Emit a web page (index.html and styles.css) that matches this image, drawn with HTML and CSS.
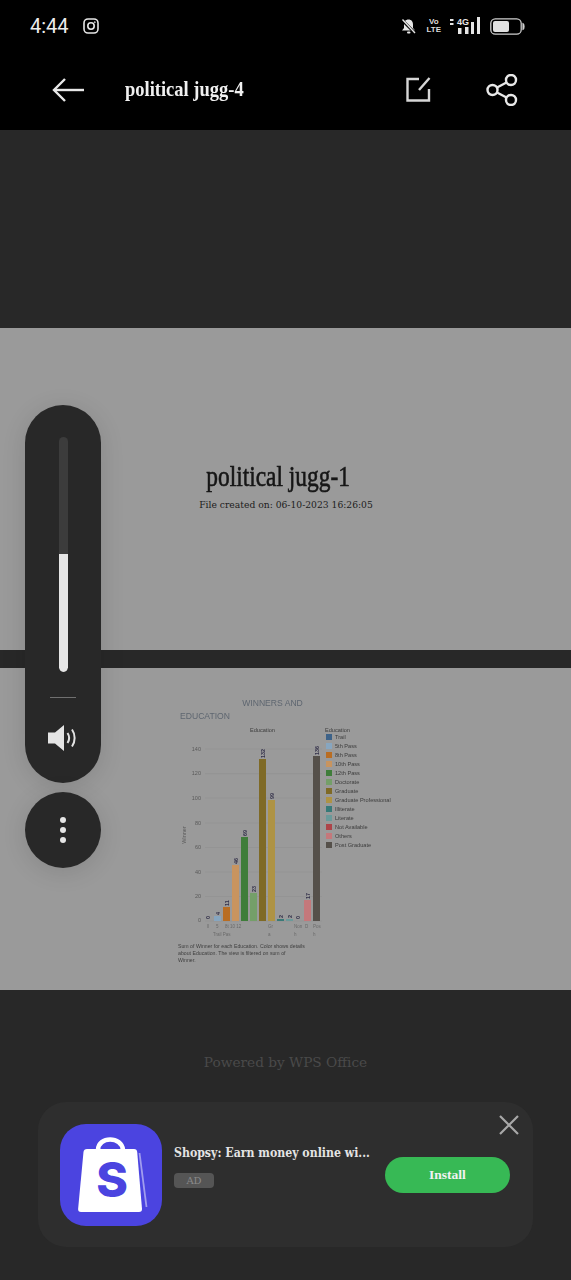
FILE: index.html
```html
<!DOCTYPE html>
<html lang="en">
<head>
    <meta charset="UTF-8">
    <meta name="viewport" content="width=device-width, initial-scale=1.0">
    <title>political jugg-4</title>
    <link rel="stylesheet" href="styles.css">
</head>
<body>
    <div class="screen">
        <!--status bar-->
        <div class="status">
            <div class="status-left">
                <span class="clock">4:44</span>
                <svg class="ig" width="16" height="16" viewBox="0 0 16 16" fill="none" stroke="#e6e6e6" stroke-width="1.6">
                    <rect x="1" y="1" width="14" height="14" rx="4"/>
                    <circle cx="8" cy="8" r="3.2"/>
                    <circle cx="11.8" cy="4.2" r=".6" fill="#e6e6e6" stroke-width=".5"/>
                </svg>
            </div>
            <div class="status-right">
                <svg width="17" height="17" viewBox="0 0 17 17">
                    <path d="M8.5 1.5c-3 0-4.5 2.300-4.500 5v3.500L2 12.500h13L13 10V6.500c0-2.700-1.500-5-4.500-5z" fill="#e6e6e6"/>
                    <rect x="7" y="13.500" width="3.500" height="2" rx="1" fill="#e6e6e6"/>
                    <path d="M2 2l13 13" stroke="#000" stroke-width="3"/>
                    <path d="M2.500 1.500l12.500 13.500" stroke="#e6e6e6" stroke-width="1.400"/>
                </svg>
                <div class="volte"><span>Vo</span><span>LTE</span></div>
                <svg class="signal" width="31" height="18" viewBox="0 0 31 18" fill="#e6e6e6">
                    <rect x="0" y="2" width="3.500" height="2"/>
                    <rect x="0" y="6" width="3.500" height="2"/>
                    <text x="7" y="8" class="net">4G</text>
                    <rect x="8" y="11" width="3.500" height="6"/>
                    <rect x="15" y="10" width="3.500" height="7"/>
                    <rect x="21" y="5" width="3" height="12"/>
                    <rect x="27" y="0" width="3" height="17"/>
                </svg>
                <svg width="35" height="17" viewBox="0 0 35 17" fill="none">
                    <rect x=".8" y=".8" width="30.400" height="15.400" rx="4.500" stroke="#cfcfcf" stroke-width="1.300"/>
                    <rect x="3" y="3" width="16" height="11" rx="2" fill="#e0e0e0"/>
                    <path d="M33 5.500c1.400.5 1.400 5.500 0 6z" stroke="#cfcfcf" stroke-width="1.200"/>
                </svg>
            </div>
        </div>

        <!--title bar-->
        <div class="toolbar">
            <svg class="back" width="32" height="24" viewBox="0 0 32 24" fill="none" stroke="#e8e8e8" stroke-width="2.400">
                <path d="M32 12H2"/>
                <path d="M13 1L2 12l11 11"/>
            </svg>
            <div class="doc-name">political jugg-4</div>
            <svg class="edit" width="25" height="25" viewBox="0 0 25 25" fill="none" stroke="#d6d6d6" stroke-width="2.400">
                <path d="M13 2H1.500v21.500h21.500V12"/>
                <path d="M23.500 1L13 13"/>
            </svg>
            <svg class="share" width="32" height="32" viewBox="0 0 32 32" fill="none" stroke="#e8e8e8" stroke-width="2.400">
                <circle cx="6.500" cy="16" r="5"/>
                <circle cx="25" cy="6" r="5"/>
                <circle cx="25" cy="26" r="5"/>
                <path d="M11 13.500l9.500-5M11 18.500l9.500 5"/>
            </svg>
        </div>

        <!--pages-->
        <div class="viewer">
            <div class="slide slide-title">
                <h1>political jugg-1</h1>
                <p>File created on: 06-10-2023 16:26:05</p>
            </div>
            <div class="slide slide-chart">
                <svg class="chart" width="240" height="300" viewBox="160 680 240 300">
                    <text x="272.500" y="706" class="c-title" text-anchor="middle">WINNERS AND</text>
                    <text x="180" y="719" class="c-title">EDUCATION</text>
                    <text x="250" y="732" class="c-small">Education</text>
                    <text x="325" y="732" class="c-small">Education</text>

                    <g class="grid">
                        <path d="M205 749H322M205 773.600H322M205 798H322M205 823H322M205 847.500H322M205 872H322M205 896.500H322M205 921H322"/>
                    </g>
                    <g class="c-axis">
                        <text x="201" y="751" text-anchor="end">140</text>
                        <text x="201" y="775" text-anchor="end">120</text>
                        <text x="201" y="800" text-anchor="end">100</text>
                        <text x="201" y="825" text-anchor="end">80</text>
                        <text x="201" y="849" text-anchor="end">60</text>
                        <text x="201" y="874" text-anchor="end">40</text>
                        <text x="201" y="898" text-anchor="end">20</text>
                        <text x="201" y="922" text-anchor="end">0</text>
                    </g>
                    <text class="c-axis" transform="translate(186 835) rotate(-90)" text-anchor="middle">Winner</text>

                    <!--bars-->
                    <rect x="214" y="916" width="7" height="5" fill="#87a6c0"/>
                    <rect x="223" y="907" width="7" height="14" fill="#b96d22"/>
                    <rect x="232" y="865" width="7" height="56" fill="#c8945f"/>
                    <rect x="241" y="837" width="7" height="84" fill="#3f7d3a"/>
                    <rect x="250" y="893" width="7" height="28" fill="#749f69"/>
                    <rect x="259" y="759" width="7" height="162" fill="#7f6a26"/>
                    <rect x="268" y="800" width="7" height="121" fill="#ae9344"/>
                    <rect x="277" y="919" width="7" height="2" fill="#3a7a78"/>
                    <rect x="286" y="919" width="7" height="2" fill="#6b9a9a"/>
                    <rect x="304" y="900" width="7" height="21" fill="#c4787b"/>
                    <rect x="313" y="756" width="7" height="165" fill="#55504a"/>

                    <!--값 라벨은 세로로 회전-->
                    <g class="c-val">
                        <text transform="translate(210 919) rotate(-90)">0</text>
                        <text transform="translate(219.500 915) rotate(-90)">4</text>
                        <text transform="translate(228.500 906) rotate(-90)">11</text>
                        <text transform="translate(237.500 864) rotate(-90)">46</text>
                        <text transform="translate(246.500 836) rotate(-90)">69</text>
                        <text transform="translate(255.500 892) rotate(-90)">23</text>
                        <text transform="translate(264.500 758) rotate(-90)">132</text>
                        <text transform="translate(273.500 799) rotate(-90)">99</text>
                        <text transform="translate(282.500 918) rotate(-90)">2</text>
                        <text transform="translate(291.500 918) rotate(-90)">2</text>
                        <text transform="translate(300 919) rotate(-90)">0</text>
                        <text transform="translate(309.500 899) rotate(-90)">17</text>
                        <text transform="translate(318.500 755) rotate(-90)">136</text>
                    </g>
                    <g class="c-tick">
                        <text x="207" y="928">Il</text>
                        <text x="216" y="928">5</text>
                        <text x="225" y="928">8t 10 12</text>
                        <text x="268" y="928">Gr</text>
                        <text x="294" y="928">Non</text>
                        <text x="305" y="928">D</text>
                        <text x="313" y="928">Pos</text>
                        <text x="213" y="936">Trail Pas</text>
                        <text x="268" y="936">a</text>
                        <text x="294" y="936">h</text>
                        <text x="313" y="936">h</text>
                    </g>

                    <!--legend-->
                    <g class="c-small">
                        <rect x="326" y="734" width="6" height="6" fill="#3d6288"/><text x="335" y="739">Trail</text>
                        <rect x="326" y="743" width="6" height="6" fill="#87a6c0"/><text x="335" y="748">5th Pass</text>
                        <rect x="326" y="752" width="6" height="6" fill="#b96d22"/><text x="335" y="757">8th Pass</text>
                        <rect x="326" y="761" width="6" height="6" fill="#c8945f"/><text x="335" y="766">10th Pass</text>
                        <rect x="326" y="770" width="6" height="6" fill="#3f7d3a"/><text x="335" y="775">12th Pass</text>
                        <rect x="326" y="779" width="6" height="6" fill="#749f69"/><text x="335" y="784">Doctorate</text>
                        <rect x="326" y="788" width="6" height="6" fill="#7f6a26"/><text x="335" y="793">Graduate</text>
                        <rect x="326" y="797" width="6" height="6" fill="#ae9344"/><text x="335" y="802">Graduate Professional</text>
                        <rect x="326" y="806" width="6" height="6" fill="#377a78"/><text x="335" y="811">Illiterate</text>
                        <rect x="326" y="815" width="6" height="6" fill="#6b9a9a"/><text x="335" y="820">Literate</text>
                        <rect x="326" y="824" width="6" height="6" fill="#ad4449"/><text x="335" y="829">Not Available</text>
                        <rect x="326" y="833" width="6" height="6" fill="#c4787b"/><text x="335" y="838">Others</text>
                        <rect x="326" y="842" width="6" height="6" fill="#55504a"/><text x="335" y="847">Post Graduate</text>
                    </g>

                    <g class="c-note">
                        <text x="178" y="948">Sum of Winner for each Education.  Color shows details</text>
                        <text x="178" y="955">about Education.  The view is filtered on sum of</text>
                        <text x="178" y="962">Winner.</text>
                    </g>
                </svg>
            </div>
            <div class="powered">Powered by WPS Office</div>

            <!--ad-->
            <div class="ad">
                <svg class="ad-logo" width="102" height="102" viewBox="0 0 102 102">
                    <rect width="102" height="102" rx="26" fill="#4b44e0"/>
                    <path d="M38 26c0-14 24-14 25 0" fill="none" stroke="#fff" stroke-width="4.500"/>
                    <path d="M27 25H74c2 0 3 1 3.200 3L82 85c.1 2-1 3-3 3H21c-2 0-3-1-2.900-3L23.500 28c.2-2 1.500-3 3.500-3z" fill="#fff"/>
                    <path d="M79.500 29l7 54" stroke="#a19dee" stroke-width="1.800"/>
                    <text x="52" y="73" class="ad-s" text-anchor="middle">S</text>
                </svg>
                <div class="ad-text">
                    <div class="ad-name">Shopsy: Earn money online wi...</div>
                    <span class="ad-tag">AD</span>
                </div>
                <button class="install">Install</button>
                <svg class="ad-close" width="20" height="20" viewBox="0 0 20 20" stroke="#a8a8a8" stroke-width="2.200">
                    <path d="M1 1l18 18M19 1L1 19"/>
                </svg>
            </div>
        </div>

        <!--floating volume control-->
        <div class="float">
            <div class="volume">
                <div class="track"><div class="fill"></div></div>
                <div class="divider"></div>
                <svg width="30" height="28" viewBox="0 0 30 28" fill="#e4e4e4">
                    <path d="M0 8.500h7L16 1v26l-9-7.500H0z"/>
                    <path d="M19.500 9c2 3 2 7 0 10" fill="none" stroke="#e4e4e4" stroke-width="2"/>
                    <path d="M24 5.500c3.500 5 3.500 12 0 17" fill="none" stroke="#e4e4e4" stroke-width="2"/>
                </svg>
            </div>
            <div class="more">
                <span></span><span></span><span></span>
            </div>
        </div>
    </div>
</body>
</html>
```

FILE: styles.css
```css
*{
 box-sizing: border-box;
}
body{
 margin: 0;
 background-color: #282828;
 font-family: "DejaVu Serif", serif;
}
.screen{
 width: 571px;
 height: 1280px;
 overflow: hidden;
 position: relative;/*float 기준*/
}

/* status bar */
.status{
 height: 52px;
 background-color: #000;
 display: flex;
 justify-content: space-between;
 align-items: center;
 padding: 0 46px 0 30px;
}
.status-left, .status-right{
 display: flex;
 align-items: center;
}
.status-left{
 gap: 14px;
}
.status-right{
 gap: 9px;
}
.clock{
 font-family: Roboto, sans-serif;
 font-size: 20px;
 font-weight: 400;
 color: #ececec;
}
.volte{
 display: flex;
 flex-direction: column;
 font-family: "Liberation Sans", sans-serif;
 font-size: 8px;
 font-weight: 700;
 line-height: 8px;
 color: #dcdcdc;
 text-align: center;
}
.net{
 font-family: "Liberation Sans", sans-serif;
 font-size: 9px;
 font-weight: 700;
}

/* title bar */
.toolbar{
 height: 78px;
 background-color: #000;
 display: flex;
 align-items: center;
 padding: 0 53px 0 52px;
}
.back{
 margin-top: -2px;
}
.doc-name{
 flex: 1;
 margin: -4px 0 0 41px;
 font-family: "Liberation Serif", serif;
 font-size: 21.500px;
 font-weight: 700;
 color: #f0f0f0;
 transform: scaleX(.86);/*원본 글꼴이 더 좁다*/
 transform-origin: left center;
}
.edit{
 margin-right: 55px;
 margin-top: -3px;
}
.share{
 margin-top: -3px;
}

/* pages */
.viewer{
 padding-top: 198px;
}
.slide{
 height: 322px;
 background-color: #9a9a9a;
}
.slide-title{
 margin-bottom: 18px;
 display: flex;
 flex-direction: column;
 align-items: center;
 padding-top: 130px;
 padding-left: 1px;
}
.slide-title h1{
 margin: 0 15px 0 0;
 font-family: "Liberation Serif", serif;
 font-size: 30px;
 font-weight: 400;
 line-height: 36px;
 color: #161616;
 -webkit-text-stroke: .6px #161616;
 transform: scaleX(.78);
}
.slide-title p{
 margin: 4px 0 0;
 font-size: 9.200px;
 line-height: 14px;
 color: #1c1c1c;
}
.slide-chart{
 padding: 12px 0 0 160px;
}
.chart{
 display: block;
 filter: blur(.6px);
}
.c-title{
 font-family: "Liberation Sans", sans-serif;
 font-size: 8.600px;
 fill: #5e6670;
}
.c-small{
 font-family: "Liberation Sans", sans-serif;
 font-size: 5.600px;
 fill: #3c3c3c;
}
.c-axis{
 font-family: "Liberation Sans", sans-serif;
 font-size: 5.500px;
 fill: #5a5a5a;
}
.c-val{
 font-family: "Liberation Sans", sans-serif;
 font-size: 5.500px;
 font-weight: 700;
 fill: #33304a;
}
.c-tick{
 font-family: "Liberation Sans", sans-serif;
 font-size: 4.500px;
 fill: #6a6a6a;
}
.c-note{
 font-family: "Liberation Sans", sans-serif;
 font-size: 5.200px;
 fill: #3f3f3f;
}
.grid path{
 stroke: #8e8e8e;
 stroke-width: .5;
 fill: none;
}
.powered{
 margin-top: 63px;
 text-align: center;
 font-size: 13.700px;
 line-height: 18px;
 color: #4a4a4a;
}

/* ad */
.ad{
 position: relative;
 margin: 31px 38px 0;
 height: 145px;
 background-color: #2e2e2e;
 border-radius: 28px;
 display: flex;
 align-items: center;
 padding: 0 23px 0 22px;
}
.ad-logo{
 flex-shrink: 0;
}
.ad-s{
 font-family: Inter, sans-serif;
 font-size: 48px;
 font-weight: 800;
 fill: #4b44e0;
}
.ad-text{
 flex: 1;
 min-width: 0;
 margin: -17px 0 0 12px;
}
.ad-name{
 font-size: 12.200px;
 font-stretch: condensed;
 line-height: 18px;
 font-weight: 700;
 color: #e4e4e4;
 white-space: nowrap;
}
.ad-tag{
 display: block;
 width: 40px;
 height: 15px;
 margin-top: 11px;
 background-color: #555;
 border-radius: 4px;
 text-align: center;
 font-size: 10px;
 line-height: 15px;
 color: #8a8a8a;
}
.install{
 flex-shrink: 0;
 width: 125px;
 height: 36px;
 margin-top: 1px;
 padding: 0;
 border: none;
 border-radius: 18px;
 background-color: #37b955;
 color: #f2f2f2;
 font-family: "Liberation Serif", serif;
 font-size: 13.500px;
 font-weight: 700;
}
.ad-close{
 position: absolute;
 top: 13px;
 right: 14px;
}

/* floating volume */
.float{
 position: absolute;
 left: 25px;
 top: 405px;
 width: 76px;
 display: flex;
 flex-direction: column;
 gap: 9px;
}
.volume{
 height: 378px;
 background-color: #282828;
 border-radius: 38px;
 display: flex;
 flex-direction: column;
 align-items: center;
 padding-top: 32px;
 box-shadow: 0 4px 24px rgba(0,0,0,.12);
}
.track{
 width: 9px;
 height: 235px;
 background-color: #3c3c3c;
 border-radius: 5px;
 display: flex;
 flex-direction: column;
 justify-content: flex-end;
 overflow: hidden;
}
.fill{
 height: 118px;
 background-color: #e6e6e6;
 border-radius: 0 0 5px 5px;
}
.divider{
 width: 26px;
 height: 1px;
 margin: 25px 0 26px;
 background-color: #707070;
}
.more{
 height: 76px;
 background-color: #282828;
 border-radius: 50%;
 display: flex;
 flex-direction: column;
 align-items: center;
 justify-content: center;
 gap: 4px;
 box-shadow: 0 4px 24px rgba(0,0,0,.12);
}
.more span{
 width: 6px;
 height: 6px;
 border-radius: 50%;
 background-color: #e6e6e6;
}
```
